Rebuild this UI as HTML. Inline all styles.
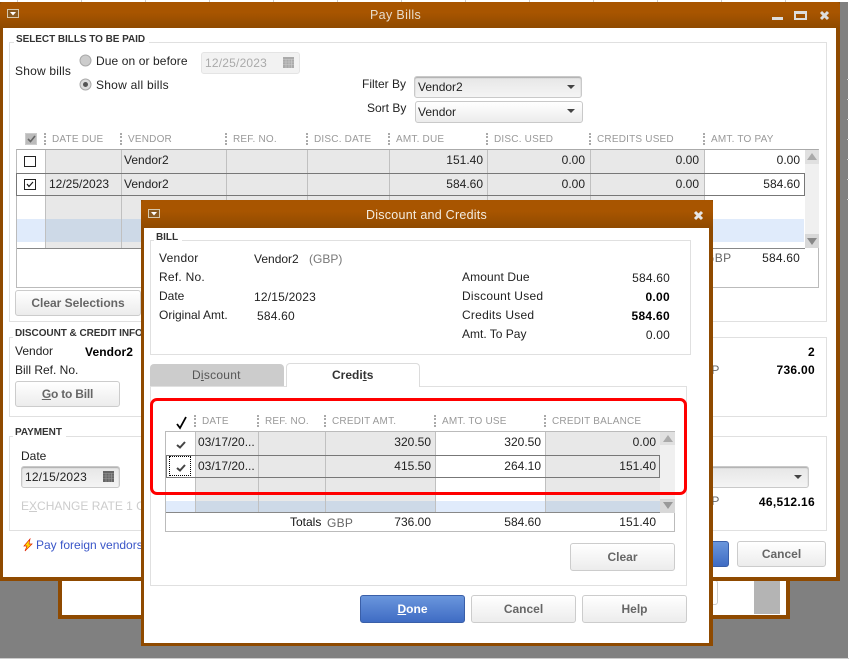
<!DOCTYPE html>
<html><head><meta charset="utf-8"><style>
html,body{margin:0;padding:0;width:849px;height:660px;overflow:hidden;background:#fff}
body{position:relative;font-family:"Liberation Sans",Arial,sans-serif;font-size:12px;color:#222}
div,span.t,a,svg{position:absolute}
.t{position:absolute;white-space:nowrap;line-height:14px}
.s{letter-spacing:.25px}
.r{text-align:right}
.h{color:#999;font-size:10px;letter-spacing:.2px}
.b{font-weight:bold;color:#000;letter-spacing:.3px}
.g{color:#666}
.sec{border:1px solid #e0e0e0;box-sizing:border-box}
.lab{position:absolute;background:#fff;font-weight:bold;font-size:10px;color:#333;line-height:12px;padding:0 4px 0 2px;white-space:nowrap;letter-spacing:-.05px}
.win{background:#fff;box-sizing:border-box;border:solid #8f4a00;}
.tb{background:linear-gradient(#a85500,#a85500 40%,#8f4a00)}
.btn{box-sizing:border-box;border:1px solid #ccc;border-radius:3px;background:linear-gradient(#fff,#ececec);color:#666;font-weight:bold;text-align:center}
.fld{box-sizing:border-box;border:1px solid #c9c9c9;border-radius:3px;background:linear-gradient(#e6e6e6,#f4f4f4);box-shadow:inset 0 1px 1px #aaa}
.sep{width:0;height:12px;border-left:2px dotted #aaa}
.v{width:1px;background:#c0c0c0}
.ar{width:0;height:0;border-left:4px solid transparent;border-right:4px solid transparent;border-top:4px solid #444}
u{text-decoration:underline}
</style></head><body>

<!-- background -->
<div style="left:0;top:2px;width:848px;height:656px;background:#808080"></div>
<div style="left:17px;top:0;width:1px;height:2px;background:#ccc"></div><div style="left:81px;top:0;width:1px;height:2px;background:#ccc"></div><div style="left:145px;top:0;width:1px;height:2px;background:#ccc"></div><div style="left:209px;top:0;width:1px;height:2px;background:#ccc"></div><div style="left:273px;top:0;width:1px;height:2px;background:#ccc"></div><div style="left:337px;top:0;width:1px;height:2px;background:#ccc"></div><div style="left:401px;top:0;width:1px;height:2px;background:#ccc"></div><div style="left:465px;top:0;width:1px;height:2px;background:#ccc"></div><div style="left:529px;top:0;width:1px;height:2px;background:#ccc"></div><div style="left:593px;top:0;width:1px;height:2px;background:#ccc"></div><div style="left:657px;top:0;width:1px;height:2px;background:#ccc"></div><div style="left:721px;top:0;width:1px;height:2px;background:#ccc"></div><div style="left:785px;top:0;width:1px;height:2px;background:#ccc"></div>
<div style="left:0;top:658px;width:849px;height:1px;background:#ccc"></div>
<div style="left:847px;top:79px;width:2px;height:1px;background:#ccc"></div><div style="left:847px;top:99px;width:2px;height:1px;background:#ccc"></div><div style="left:847px;top:119px;width:2px;height:1px;background:#ccc"></div><div style="left:847px;top:139px;width:2px;height:1px;background:#ccc"></div><div style="left:847px;top:159px;width:2px;height:1px;background:#ccc"></div><div style="left:847px;top:179px;width:2px;height:1px;background:#ccc"></div><div style="left:847px;top:199px;width:2px;height:1px;background:#ccc"></div>

<!-- back window -->
<div class="win" style="left:58px;top:500px;width:732px;height:119px;border-width:0 4px 4px 4px"></div>
<div style="left:754px;top:580px;width:26px;height:34px;background:#b4b4b4"></div>
<div style="left:700px;top:580px;width:18px;height:25px;border:1px solid #ccc;border-radius:3px;box-sizing:border-box"></div>

<!-- main window -->
<div class="win" style="left:0;top:2px;width:840px;height:579px;border-width:0 4px 4px 3px"></div>
<div class="tb" style="left:0;top:2px;width:840px;height:26px;border-radius:3px 3px 0 0"></div>
<svg style="left:7px;top:9px" width="12" height="9"><rect x=".5" y=".5" width="11" height="8" fill="#8a5a20" stroke="#d8c8ac"/><path d="M3 3h6L6 6.500z" fill="#fff"/></svg>
<span class="t" style="left:370px;top:8px;color:#e8dccb;font-size:12.5px;letter-spacing:.35px">Pay Bills</span>
<div style="left:772px;top:17px;width:11px;height:3px;background:#ddd"></div>
<div style="left:794px;top:11px;width:13px;height:9px;box-sizing:border-box;border:2px solid #ddd;border-top-width:3px"></div>
<svg style="left:819px;top:10px" width="11" height="11"><path d="M2 2l7 7M9 2l-7 7" stroke="#ddd" stroke-width="3"/></svg>

<!-- select bills -->
<div class="sec" style="left:9px;top:42px;width:818px;height:280px"></div>
<span class="lab" style="left:14px;top:34px">SELECT BILLS TO BE PAID</span>
<span class="t" style="left:15px;top:64px;letter-spacing:.2px">Show bills</span>
<svg style="left:79px;top:54px" width="13" height="13"><circle cx="6.500" cy="6.500" r="5.500" fill="#ccc" stroke="#aaa"/></svg>
<span class="t" style="left:96px;top:54px;letter-spacing:.1px">Due on or before</span>
<svg style="left:79px;top:78px" width="13" height="13"><circle cx="6.500" cy="6.500" r="5.500" fill="#ddd" stroke="#aaa"/><circle cx="6.500" cy="6.500" r="2.500" fill="#555"/></svg>
<span class="t s" style="left:96px;top:78px">Show all bills</span>
<div style="left:201px;top:52px;width:99px;height:22px;box-sizing:border-box;border:1px solid #e4e4e4;border-radius:3px;background:#f2f2f2"></div>
<span class="t" style="left:205px;top:56px;color:#aaa;letter-spacing:.2px">12/25/2023</span>
<svg style="left:283px;top:57px" width="11" height="11"><rect width="11" height="11" fill="#aaa"/><path d="M0 2.500h11M0 5h11M0 7.500h11M3 2v9M6 2v9M8.500 2v9" stroke="#ccc" stroke-width=".6"/></svg>
<span class="t" style="left:362px;top:77px">Filter By</span>
<span class="t" style="left:367px;top:101px">Sort By</span>
<div class="fld" style="left:414px;top:76px;width:168px;height:22px"></div>
<span class="t" style="left:418px;top:80px">Vendor2</span>
<div class="ar" style="left:567px;top:85px"></div>
<div class="fld" style="left:415px;top:101px;width:168px;height:22px;background:linear-gradient(#fff,#ececec);box-shadow:none"></div>
<span class="t" style="left:418px;top:105px">Vendor</span>
<div class="ar" style="left:567px;top:109px"></div>

<!-- main grid header -->
<div style="left:25px;top:133px;width:10px;height:10px;background:#bbb;border:1px solid #ccc"></div>
<svg style="left:26px;top:134px" width="11" height="10"><path d="M2 5l2.500 2.500L9 2" stroke="#666" stroke-width="1.600" fill="none"/></svg>
<div class="sep" style="left:44px;top:133px"></div><span class="t h" style="left:52px;top:133px">DATE DUE</span>
<div class="sep" style="left:120px;top:133px"></div><span class="t h" style="left:128px;top:133px">VENDOR</span>
<div class="sep" style="left:225px;top:133px"></div><span class="t h" style="left:233px;top:133px">REF. NO.</span>
<div class="sep" style="left:306px;top:133px"></div><span class="t h" style="left:314px;top:133px">DISC. DATE</span>
<div class="sep" style="left:388px;top:133px"></div><span class="t h" style="left:396px;top:133px">AMT. DUE</span>
<div class="sep" style="left:486px;top:133px"></div><span class="t h" style="left:494px;top:133px">DISC. USED</span>
<div class="sep" style="left:589px;top:133px"></div><span class="t h" style="left:597px;top:133px">CREDITS USED</span>
<div class="sep" style="left:703px;top:133px"></div><span class="t h" style="left:711px;top:133px">AMT. TO PAY</span>

<!-- main grid body -->
<div style="left:16px;top:149px;width:803px;height:139px;box-sizing:border-box;border:1px solid #bbb;border-top-color:#aaa;background:#fff"></div>
<div style="left:45px;top:150px;width:659px;height:92px;background:#e8e8e8"></div>
<div style="left:17px;top:219px;width:787px;height:23px;background:#e0ebfb"></div>
<div style="left:45px;top:219px;width:659px;height:23px;background:#cdd9e7"></div>
<div style="left:45px;top:242px;width:659px;height:6px;background:#e8e8e8"></div>
<div style="left:17px;top:248px;width:788px;height:1px;background:#888"></div>
<div class="v" style="left:45px;top:150px;height:98px"></div><div class="v" style="left:121px;top:150px;height:98px"></div><div class="v" style="left:226px;top:150px;height:98px"></div><div class="v" style="left:307px;top:150px;height:98px"></div><div class="v" style="left:389px;top:150px;height:98px"></div><div class="v" style="left:487px;top:150px;height:98px"></div><div class="v" style="left:590px;top:150px;height:98px"></div><div class="v" style="left:704px;top:150px;height:98px"></div>
<div style="left:805px;top:150px;width:14px;height:98px;background:#f0f0f0"></div>
<div style="left:805px;top:150px;width:14px;height:14px;background:#e0e0e0"></div>
<div style="left:805px;top:234px;width:14px;height:14px;background:#d8d8d8"></div>
<div style="left:807px;top:153px;width:0;height:0;border:5px solid transparent;border-top:0;border-bottom:7px solid #aaa"></div>
<div style="left:807px;top:238px;width:0;height:0;border:5px solid transparent;border-bottom:0;border-top:7px solid #888"></div>
<div style="left:16px;top:173px;width:789px;height:23px;box-sizing:border-box;border:1px solid #777"></div>
<div style="left:24px;top:156px;width:12px;height:11px;box-sizing:border-box;border:1px solid #222;background:#fff"></div>
<div style="left:24px;top:179px;width:12px;height:11px;box-sizing:border-box;border:1px solid #222;background:#fff"></div>
<svg style="left:25px;top:179px" width="11" height="11"><path d="M2 5l2 2.500L8 3" stroke="#111" stroke-width="1.100" fill="none"/></svg>
<span class="t" style="left:124px;top:153px">Vendor2</span>
<span class="t" style="left:49px;top:177px">12/25/2023</span>
<span class="t" style="left:124px;top:177px">Vendor2</span>
<span class="t r" style="right:366px;top:153px">151.40</span><span class="t r" style="right:264px;top:153px">0.00</span><span class="t r" style="right:150px;top:153px">0.00</span><span class="t r" style="right:49px;top:153px">0.00</span>
<span class="t r" style="right:366px;top:177px">584.60</span><span class="t r" style="right:264px;top:177px">0.00</span><span class="t r" style="right:150px;top:177px">0.00</span><span class="t r" style="right:49px;top:177px">584.60</span>
<span class="t g" style="left:705px;top:251px;letter-spacing:.4px">GBP</span>
<span class="t r" style="right:49px;top:251px;letter-spacing:.2px">584.60</span>

<div class="btn" style="left:15px;top:290px;width:126px;height:26px;line-height:24px">Clear Selections</div>

<!-- discount info -->
<div class="sec" style="left:9px;top:337px;width:818px;height:80px"></div>
<span class="lab" style="left:13px;top:328px">DISCOUNT &amp; CREDIT INFORMATION</span>
<span class="t" style="left:15px;top:344px">Vendor</span>
<span class="t b" style="left:85px;top:345px;letter-spacing:.1px">Vendor2</span>
<span class="t" style="left:15px;top:363px">Bill Ref. No.</span>
<div class="btn" style="left:15px;top:381px;width:105px;height:26px;line-height:24px;letter-spacing:-.2px"><u>G</u>o to Bill</div>
<span class="t g" style="left:694px;top:363px">GBP</span>
<span class="t b r" style="right:34px;top:345px">2</span>
<span class="t b r" style="right:34px;top:363px">736.00</span>

<!-- payment -->
<div class="sec" style="left:9px;top:436px;width:818px;height:95px"></div>
<span class="lab" style="left:13px;top:427px">PAYMENT</span>
<span class="t" style="left:21px;top:449px">Date</span>
<div class="fld" style="left:21px;top:466px;width:99px;height:22px"></div>
<span class="t" style="left:25px;top:470px;letter-spacing:.2px">12/15/2023</span>
<svg style="left:103px;top:471px" width="11" height="11"><rect width="11" height="11" fill="#666"/><path d="M0 2.500h11M0 5h11M0 7.500h11M3 2v9M6 2v9M8.500 2v9" stroke="#999" stroke-width=".6"/></svg>
<span class="t" style="left:21px;top:499px;color:#ccc">E<u>X</u>CHANGE RATE 1 GBP</span>
<div class="fld" style="left:700px;top:466px;width:109px;height:22px"></div>
<div class="ar" style="left:794px;top:475px"></div>
<span class="t g" style="left:694px;top:494px">GBP</span>
<span class="t b r" style="right:34px;top:495px">46,512.16</span>
<svg style="left:22px;top:538px" width="12" height="14"><path d="M8 1L2 8h3l-2 5 7-7H7z" fill="#ffe000" stroke="#e02000" stroke-width=".7"/></svg>
<span class="t" style="left:36px;top:538px;color:#3a56c8">Pay foreign vendors</span>
<div style="left:680px;top:541px;width:49px;height:26px;box-sizing:border-box;border:1px solid #3a5fa8;border-radius:3px;background:linear-gradient(#6a96dc,#3f6cc4)"></div>
<div class="btn" style="left:737px;top:541px;width:89px;height:26px;line-height:24px">Cancel</div>

<!-- dialog -->
<div class="win" style="left:141px;top:200px;width:572px;height:446px;border-width:0 4px 3px 3px"></div>
<div class="tb" style="left:141px;top:200px;width:572px;height:28px;border-radius:3px 3px 0 0"></div>
<svg style="left:148px;top:209px" width="12" height="9"><rect x=".5" y=".5" width="11" height="8" fill="#8a5a20" stroke="#d8c8ac"/><path d="M3 3h6L6 6.500z" fill="#fff"/></svg>
<span class="t" style="left:366px;top:208px;color:#f4ecdf;font-size:12.5px;letter-spacing:.25px">Discount and Credits</span>
<svg style="left:693px;top:210px" width="11" height="11"><path d="M2 2l7 7M9 2l-7 7" stroke="#e6e6e6" stroke-width="3"/></svg>

<div class="sec" style="left:150px;top:240px;width:541px;height:115px"></div>
<span class="lab" style="left:154px;top:232px">BILL</span>
<span class="t s" style="left:159px;top:251px">Vendor</span>
<span class="t" style="left:254px;top:252px">Vendor2</span><span class="t g" style="left:309px;top:252px;color:#777">(GBP)</span>
<span class="t s" style="left:159px;top:270px">Ref. No.</span>
<span class="t" style="left:159px;top:289px">Date</span>
<span class="t" style="left:254px;top:290px;letter-spacing:.2px">12/15/2023</span>
<span class="t" style="left:159px;top:308px">Original Amt.</span>
<span class="t" style="left:257px;top:309px;letter-spacing:.2px">584.60</span>
<span class="t" style="left:462px;top:270px;letter-spacing:.1px">Amount Due</span><span class="t r" style="right:179px;top:271px;letter-spacing:.2px">584.60</span>
<span class="t s" style="left:462px;top:289px">Discount Used</span><span class="t b r" style="right:179px;top:290px">0.00</span>
<span class="t s" style="left:462px;top:308px">Credits Used</span><span class="t b r" style="right:179px;top:309px">584.60</span>
<span class="t" style="left:462px;top:327px">Amt. To Pay</span><span class="t r" style="right:179px;top:328px;letter-spacing:.2px">0.00</span>

<!-- tabs -->
<div class="sec" style="left:150px;top:386px;width:537px;height:200px"></div>
<div style="left:150px;top:364px;width:134px;height:22px;background:#ccc;border-radius:4px 4px 0 0"></div>
<span class="t s" style="left:192px;top:368px;color:#555">D<u>i</u>scount</span>
<div style="left:286px;top:363px;width:134px;height:24px;box-sizing:border-box;border:1px solid #dcdcdc;border-bottom:0;border-radius:4px 4px 0 0;background:#fff"></div>
<span class="t" style="left:332px;top:368px;font-weight:bold;color:#333">Credi<u>t</u>s</span>

<!-- credit grid -->
<svg style="left:175px;top:416px" width="14" height="14"><path d="M2 8l3 4L11 1" stroke="#000" stroke-width="1.800" fill="none"/></svg>
<div class="sep" style="left:194px;top:415px"></div><span class="t h" style="left:202px;top:415px">DATE</span>
<div class="sep" style="left:257px;top:415px"></div><span class="t h" style="left:265px;top:415px">REF. NO.</span>
<div class="sep" style="left:324px;top:415px"></div><span class="t h" style="left:332px;top:415px">CREDIT AMT.</span>
<div class="sep" style="left:434px;top:415px"></div><span class="t h" style="left:442px;top:415px">AMT. TO USE</span>
<div class="sep" style="left:544px;top:415px"></div><span class="t h" style="left:552px;top:415px">CREDIT BALANCE</span>

<div style="left:165px;top:431px;width:510px;height:101px;box-sizing:border-box;border:1px solid #bbb;background:#fff"></div>
<div style="left:195px;top:432px;width:240px;height:69px;background:#e8e8e8"></div>
<div style="left:545px;top:432px;width:115px;height:69px;background:#e8e8e8"></div>
<div style="left:166px;top:501px;width:494px;height:11px;background:#e0ebfb"></div>
<div style="left:195px;top:501px;width:240px;height:11px;background:#cdd9e7"></div>
<div style="left:545px;top:501px;width:115px;height:11px;background:#cdd9e7"></div>
<div style="left:166px;top:512px;width:494px;height:1px;background:#888"></div>
<div class="v" style="left:195px;top:432px;height:80px"></div><div class="v" style="left:258px;top:432px;height:80px"></div><div class="v" style="left:325px;top:432px;height:80px"></div><div class="v" style="left:435px;top:432px;height:80px"></div><div class="v" style="left:545px;top:432px;height:80px"></div>
<div style="left:660px;top:432px;width:15px;height:81px;background:#f0f0f0"></div>
<div style="left:660px;top:432px;width:15px;height:13px;background:#e0e0e0"></div>
<div style="left:660px;top:499px;width:15px;height:14px;background:#d8d8d8"></div>
<div style="left:663px;top:435px;width:0;height:0;border:5px solid transparent;border-top:0;border-bottom:7px solid #aaa"></div>
<div style="left:663px;top:502px;width:0;height:0;border:5px solid transparent;border-bottom:0;border-top:7px solid #999"></div>
<div style="left:166px;top:455px;width:494px;height:23px;box-sizing:border-box;border:1px solid #777"></div>
<div style="left:169px;top:456px;width:22px;height:20px;box-sizing:border-box;border:1px dotted #000"></div>
<svg style="left:175px;top:439px" width="12" height="11"><path d="M2 6l3 2.500L10 3" stroke="#444" stroke-width="2" fill="none"/></svg>
<svg style="left:175px;top:462px" width="12" height="11"><path d="M2 6l3 2.500L10 3" stroke="#444" stroke-width="2" fill="none"/></svg>
<span class="t" style="left:198px;top:435px">03/17/20...</span><span class="t" style="left:198px;top:459px">03/17/20...</span>
<span class="t r" style="right:418px;top:435px">320.50</span><span class="t r" style="right:308px;top:435px">320.50</span><span class="t r" style="right:193px;top:435px">0.00</span>
<span class="t r" style="right:418px;top:459px">415.50</span><span class="t r" style="right:308px;top:459px">264.10</span><span class="t r" style="right:193px;top:459px">151.40</span>
<span class="t" style="left:290px;top:515px;color:#111">Totals</span><span class="t g s" style="left:327px;top:516px">GBP</span>
<span class="t r" style="right:418px;top:515px">736.00</span><span class="t r" style="right:308px;top:515px">584.60</span><span class="t r" style="right:193px;top:515px">151.40</span>

<!-- red highlight -->
<div style="left:150px;top:398px;width:537px;height:97px;box-sizing:border-box;border:3px solid #f00;border-radius:7px"></div>

<div class="btn" style="left:570px;top:543px;width:105px;height:28px;line-height:26px">Clear</div>
<div class="btn" style="left:360px;top:595px;width:105px;height:28px;line-height:26px;background:linear-gradient(#6a96dc,#3f6cc4);border-color:#3a5fa8;color:#fff"><u>D</u>one</div>
<div class="btn" style="left:471px;top:595px;width:105px;height:28px;line-height:26px">Cancel</div>
<div class="btn" style="left:582px;top:595px;width:105px;height:28px;line-height:26px">Help</div>

</body></html>
